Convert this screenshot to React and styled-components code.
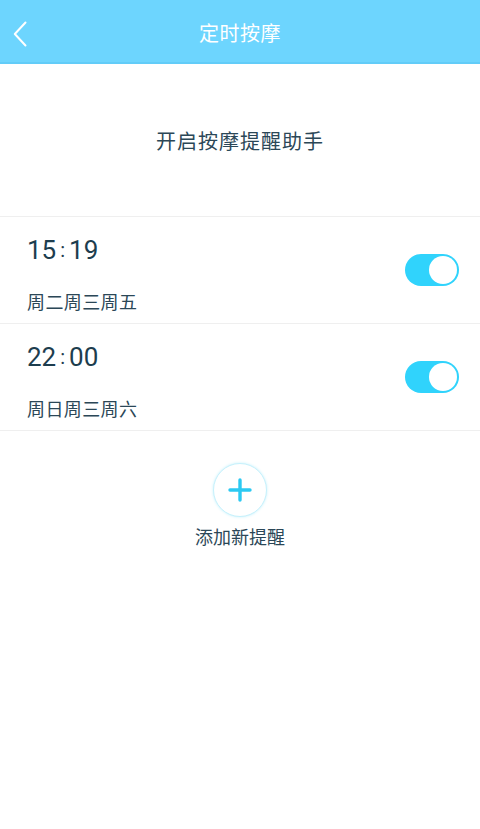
import React, { useState } from "react";
import styled, { createGlobalStyle } from "styled-components";

const GlobalStyle = createGlobalStyle`
  html, body {
    margin: 0;
    padding: 0;
    background: #fff;
  }
  body {
    font-family: Roboto, "Noto Sans CJK SC", sans-serif;
  }
`;

const initialAlarms = [
  { id: 1, hour: "15", minute: "19", days: "周二周三周五", on: true },
  { id: 2, hour: "22", minute: "00", days: "周日周三周六", on: true },
];

const App = () => {
  const [alarms, setAlarms] = useState(initialAlarms);

  const toggle = (id) => {
    setAlarms((prev) =>
      prev.map((a) => (a.id === id ? { ...a, on: !a.on } : a))
    );
  };

  return (
    <>
      <GlobalStyle />
      <Page>
        <Header>
          <BackBtn aria-label="返回">
            <svg width="14" height="26" viewBox="0 0 14 26" fill="none">
              <path
                d="M12.5 1.5 L1.8 13 L12.5 24.5"
                stroke="#fff"
                strokeWidth="2"
                strokeLinecap="round"
                strokeLinejoin="round"
              />
            </svg>
          </BackBtn>
          <Title>定时按摩</Title>
        </Header>

        <Intro>开启按摩提醒助手</Intro>

        <List>
          {alarms.map((a) => (
            <Row key={a.id}>
              <Info>
                <Time>
                  {a.hour}
                  <Colon>:</Colon>
                  {a.minute}
                </Time>
                <Days>{a.days}</Days>
              </Info>
              <Switch $on={a.on} onClick={() => toggle(a.id)}>
                <Knob $on={a.on} />
              </Switch>
            </Row>
          ))}
        </List>

        <AddArea>
          <AddCircle aria-label="添加新提醒">
            <svg width="26" height="26" viewBox="0 0 26 26">
              <path
                d="M13 3 V23 M3 13 H23"
                stroke="#2cc9f2"
                strokeWidth="3.4"
                strokeLinecap="round"
              />
            </svg>
          </AddCircle>
          <AddLabel>添加新提醒</AddLabel>
        </AddArea>
      </Page>
    </>
  );
};

export default App;

const Page = styled.div`
  width: 480px;
  min-height: 829px;
  background: #fff;
  display: flex;
  flex-direction: column;
`;

const Header = styled.div`
  height: 62px;
  background: #6dd5fe;
  border-bottom: 2px solid #62ccf8;
  display: flex;
  align-items: center;
  justify-content: center;
  position: relative;
`;

const BackBtn = styled.button`
  position: absolute;
  left: 13px;
  top: 21px;
  padding: 0;
  border: none;
  background: none;
  display: flex;
  cursor: pointer;
`;

const Title = styled.div`
  color: #fff;
  font-family: "Noto Sans CJK SC", sans-serif;
  font-size: 20px;
  margin-top: 3px;
  letter-spacing: 0.5px;
`;

const Intro = styled.div`
  height: 152px;
  display: flex;
  align-items: center;
  justify-content: center;
  color: #2b4757;
  font-family: "Noto Sans CJK SC", sans-serif;
  font-size: 20px;
  letter-spacing: 1px;
  border-bottom: 1px solid #efefef;
`;

const List = styled.div`
  display: flex;
  flex-direction: column;
`;

const Row = styled.div`
  height: 106px;
  display: flex;
  align-items: center;
  justify-content: space-between;
  padding: 0 21px 0 27px;
  border-bottom: 1px solid #efefef;
`;

const Info = styled.div`
  align-self: flex-start;
  display: flex;
  flex-direction: column;
  gap: 23px;
  padding-top: 18px;
`;

const Time = styled.div`
  color: #1d3d4e;
  font-family: Roboto, sans-serif;
  font-size: 26px;
  line-height: 30px;
`;

const Colon = styled.span`
  margin: 0 4px;
  font-size: 20px;
  position: relative;
  top: -2px;
`;

const Days = styled.div`
  color: #2b4757;
  font-family: "Noto Sans CJK SC", sans-serif;
  font-size: 18px;
  line-height: 22px;
  letter-spacing: 0.4px;
`;

const Switch = styled.button`
  width: 54px;
  height: 32px;
  border-radius: 16px;
  border: none;
  padding: 0;
  background: ${(p) => (p.$on ? "#30d3fc" : "#d6d6d6")};
  position: relative;
  cursor: pointer;
`;

const Knob = styled.span`
  position: absolute;
  top: 2px;
  left: ${(p) => (p.$on ? "24px" : "2px")};
  width: 28px;
  height: 28px;
  border-radius: 50%;
  background: #fff;
`;

const AddArea = styled.div`
  display: flex;
  flex-direction: column;
  align-items: center;
  padding-top: 32px;
  gap: 7px;
`;

const AddCircle = styled.button`
  width: 54px;
  height: 54px;
  border-radius: 50%;
  border: 1px solid #c6f1fc;
  box-shadow: 0 0 3px #c6f1fc;
  background: #fff;
  display: flex;
  align-items: center;
  justify-content: center;
  padding: 0;
  cursor: pointer;
`;

const AddLabel = styled.div`
  color: #2b4757;
  font-family: "Noto Sans CJK SC", sans-serif;
  font-size: 18px;
  line-height: 24px;
`;
